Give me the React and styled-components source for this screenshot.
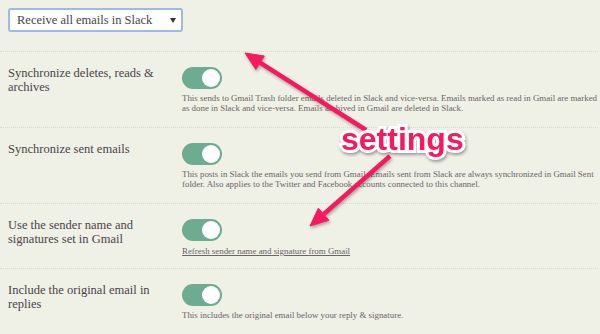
import React from 'react'
import styled, { createGlobalStyle } from 'styled-components'

const GlobalStyle = createGlobalStyle`
  html, body {
    margin: 0;
    padding: 0;
    background: #eff0e6;
  }
  body {
    font-family: "Liberation Serif", "DejaVu Serif", serif;
  }
`

const settings = [
  {
    id: 'deletes',
    label: 'Synchronize deletes, reads & archives',
    text: 'This sends to Gmail Trash folder emails deleted in Slack and vice-versa. Emails marked as read in Gmail are marked as done in Slack and vice-versa. Emails archived in Gmail are deleted in Slack.',
  },
  {
    id: 'sent',
    label: 'Synchronize sent emails',
    text: 'This posts in Slack the emails you send from Gmail. Emails sent from Slack are always synchronized in Gmail Sent folder. Also applies to the Twitter and Facebook accounts connected to this channel.',
  },
  {
    id: 'sender',
    label: 'Use the sender name and signatures set in Gmail',
    link: 'Refresh sender name and signature from Gmail',
  },
  {
    id: 'original',
    label: 'Include the original email in replies',
    text: 'This includes the original email below your reply & signature.',
  },
]

const App = () => {
  return (
    <Page>
      <GlobalStyle />
      <SelectBox>
        <span>Receive all emails in Slack</span>
        <Caret />
      </SelectBox>
      {settings.map(item => (
        <Row key={item.id} $tight={!!item.link}>
          <Label>{item.label}</Label>
          <Content>
            <Toggle><Knob /></Toggle>
            {item.text && <Help>{item.text}</Help>}
            {item.link && <HelpLink href="#">{item.link}</HelpLink>}
          </Content>
        </Row>
      ))}
      <Annotation viewBox="0 0 600 334" width="600" height="334">
        <g fill="#f7195e" stroke="#f7195e" strokeLinejoin="round">
          <line x1="366" y1="130" x2="260" y2="62.7" strokeWidth="4.5" />
          <polygon points="245,53 264.4,56 255.8,69.4" strokeWidth="1" />
          <line x1="390" y1="156" x2="323.6" y2="214.2" strokeWidth="4.5" />
          <polygon points="310,226 328.9,220.2 318.3,208.2" strokeWidth="1" />
        </g>
      </Annotation>
      <Callout>settings</Callout>
    </Page>
  )
}

export default App

const Page = styled.div`
  position: relative;
  width: 600px;
  height: 334px;
  overflow: hidden;
  padding: 8px 0 0 0;
  box-sizing: border-box;
`

const SelectBox = styled.div`
  margin-left: 8px;
  width: 175px;
  height: 24px;
  box-sizing: border-box;
  background: #fff;
  border: 2px solid #9dbbe6;
  border-radius: 3px;
  display: flex;
  align-items: center;
  justify-content: space-between;
  padding: 0 5px 0 7px;
  font-size: 12.5px;
  color: #4a4446;
  margin-bottom: 19px;
`

const Caret = styled.span`
  width: 0;
  height: 0;
  border-left: 3px solid transparent;
  border-right: 3px solid transparent;
  border-top: 5px solid #3a3335;
`

const Row = styled.div`
  display: grid;
  grid-template-columns: 174px 1fr;
  border-top: 1px dotted #d9dbc8;
  padding: 14px 0 ${p => (p.$tight ? 12 : 14)}px 8px;
  margin-right: 2px;
`

const Label = styled.div`
  font-size: 12.5px;
  line-height: 14px;
  color: #4b4446;
  width: 146px;
`

const Content = styled.div`
  display: flex;
  flex-direction: column;
  align-items: flex-start;
  padding-top: 1px;
`

const Toggle = styled.div`
  width: 40px;
  height: 22px;
  border-radius: 11px;
  background: #6dac91;
  display: flex;
  align-items: center;
  justify-content: flex-end;
  padding: 0 2px;
  box-sizing: border-box;
  margin-bottom: 5px;
`

const Knob = styled.div`
  width: 18px;
  height: 18px;
  border-radius: 50%;
  background: #fff;
`

const Help = styled.p`
  margin: 0;
  font-size: 8.9px;
  line-height: 9.5px;
  color: #6a6566;
`

const HelpLink = styled.a`
  margin-top: 0;
  font-size: 8.9px;
  line-height: 10px;
  color: #6a6566;
  text-decoration: underline;
`

const Annotation = styled.svg`
  position: absolute;
  left: 0;
  top: 0;
  pointer-events: none;
  filter: drop-shadow(1px 2px 1.5px rgba(0, 0, 0, 0.3));
`

const Callout = styled.div`
  position: absolute;
  left: 341px;
  top: 119px;
  font-family: "Liberation Sans", Arial, sans-serif;
  font-weight: bold;
  font-size: 32px;
  line-height: 40px;
  color: #f7195e;
  -webkit-text-stroke: 6px #fff;
  paint-order: stroke fill;
  filter: drop-shadow(1px 2px 1.5px rgba(0, 0, 0, 0.35));
`
